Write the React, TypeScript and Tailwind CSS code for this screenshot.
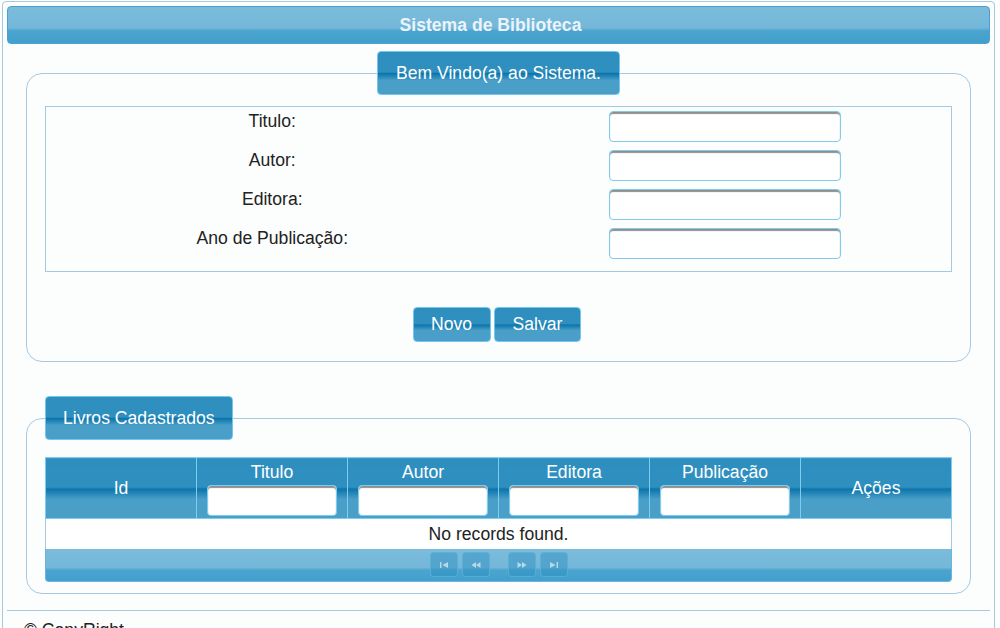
import React from "react";

const glass =
  "bg-[linear-gradient(to_bottom,#2e8fbf_0%,#2f90c0_48%,#0b74ab_51%,#4a9fc8_68%,#4a9fc8_100%)]";
const gloss =
  "bg-[linear-gradient(to_bottom,#7bbcdc_0%,#74b7d8_58%,#4ba4cf_66%,#41a0cc_100%)]";

function TextInput({ className = "" }: { className?: string }) {
  return (
    <input
      type="text"
      className={`h-[31px] bg-white border border-[#7fcdee] rounded-[4px] shadow-[inset_0_2px_1px_#8e8e8e] outline-none px-1 ${className}`}
    />
  );
}

function PagerIcon({ kind }: { kind: "first" | "prev" | "next" | "end" }) {
  const c = "#cfe6f2";
  return (
    <svg width="12" height="8" viewBox="0 0 12 8" className="opacity-80">
      {kind === "first" && (
        <>
          <rect x="2" y="1" width="1.4" height="6" fill={c} />
          <path d="M10 1 L4.5 4 L10 7 Z" fill={c} />
        </>
      )}
      {kind === "prev" && (
        <>
          <path d="M6 1 L1.5 4 L6 7 Z" fill={c} />
          <path d="M10.5 1 L6 4 L10.5 7 Z" fill={c} />
        </>
      )}
      {kind === "next" && (
        <>
          <path d="M1.5 1 L6 4 L1.5 7 Z" fill={c} />
          <path d="M6 1 L10.5 4 L6 7 Z" fill={c} />
        </>
      )}
      {kind === "end" && (
        <>
          <path d="M2 1 L7.5 4 L2 7 Z" fill={c} />
          <rect x="8.6" y="1" width="1.4" height="6" fill={c} />
        </>
      )}
    </svg>
  );
}

function PagerButton({ kind }: { kind: "first" | "prev" | "next" | "end" }) {
  return (
    <span className="w-[28px] h-[25px] rounded-[4px] border border-[#63b3dc]/70 bg-[#2a8dbf]/45 flex items-center justify-center">
      <PagerIcon kind={kind} />
    </span>
  );
}

export default function App() {
  const fields = ["Titulo:", "Autor:", "Editora:", "Ano de Publicação:"];
  const cols = ["Titulo", "Autor", "Editora", "Publicação"];

  return (
    <div className="min-h-screen bg-[#fcfdfd] font-['Liberation_Sans',Arial,sans-serif] text-[17.6px] text-[#222222]">
      <div className="ml-[2px] mt-[1px] w-[993px] min-h-[700px] border border-[#a6c9e2] rounded-[4px] p-[4px] bg-[#fcfdfd]">
        {/* Header */}
        <div
          className={`h-[38px] rounded-[4px] border border-[#4d9fcf] ${gloss} flex items-center justify-center pr-[16px] font-bold text-[#eaf4fa]`}
        >
          Sistema de Biblioteca
        </div>

        {/* Form */}
        <fieldset className="mx-[19px] mt-[7px] border border-[#a6c9e2] rounded-[16px] px-[18px] pt-[11px] pb-[19px]">
          <legend
            className={`mx-auto h-[44px] leading-[42px] px-[18px] border border-[#74c6ef] rounded-[4px] ${glass} text-white`}
          >
            Bem Vindo(a) ao Sistema.
          </legend>
          <div className="border border-[#a6c9e2] pb-[8px]">
            <table className="w-full table-fixed">
              <tbody>
                {fields.map((f) => (
                  <tr key={f}>
                    <td className="p-[4px] text-center align-top leading-[20px]">{f}</td>
                    <td className="p-[4px] text-center align-top">
                      <TextInput className="w-[232px] align-top" />
                    </td>
                  </tr>
                ))}
              </tbody>
            </table>
          </div>
          <div className="mt-[35px] flex justify-center gap-[3px] pr-[3px]">
            <button className={`h-[35px] w-[78px] border border-[#74c6ef] rounded-[4px] ${glass} text-white`}>
              Novo
            </button>
            <button className={`h-[35px] px-[18px] border border-[#74c6ef] rounded-[4px] ${glass} text-white`}>
              Salvar
            </button>
          </div>
        </fieldset>

        {/* List */}
        <fieldset className="mx-[19px] mt-[34px] border border-[#a6c9e2] rounded-[16px] px-[18px] pt-[17px] pb-[11px]">
          <legend
            className={`h-[44px] leading-[42px] px-[17px] border border-[#74c6ef] rounded-[4px] ${glass} text-white`}
          >
            Livros Cadastrados
          </legend>
          <table className="w-full table-fixed border-collapse">
            <thead>
              <tr>
                <th className={`border border-[#7ccdf2] ${glass} font-normal text-white h-[60px]`}>Id</th>
                {cols.map((c) => (
                  <th
                    key={c}
                    className={`border border-[#7ccdf2] ${glass} font-normal text-white pt-[4px] pb-[2px] px-[4px]`}
                  >
                    <div className="leading-[20px]">{c}</div>
                    <TextInput className="mt-[3px] w-[130px] h-[31px] block mx-auto" />
                  </th>
                ))}
                <th className={`border border-[#7ccdf2] ${glass} font-normal text-white`}>Ações</th>
              </tr>
            </thead>
            <tbody>
              <tr>
                <td colSpan={6} className="h-[30px] bg-white border-x border-[#a6c9e2] text-center">
                  No records found.
                </td>
              </tr>
            </tbody>
          </table>
          <div
            className={`h-[33px] ${gloss} rounded-b-[4px] border-x border-b border-[#6eb4da] flex items-center justify-center gap-[4px]`}
          >
            <PagerButton kind="first" />
            <PagerButton kind="prev" />
            <span className="w-[10px]" />
            <PagerButton kind="next" />
            <PagerButton kind="end" />
          </div>
        </fieldset>

        {/* Footer */}
        <div className="mt-[16px] border-t border-[#a6c9e2] px-[17px] pt-[6px]">© CopyRight</div>
      </div>
    </div>
  );
}
